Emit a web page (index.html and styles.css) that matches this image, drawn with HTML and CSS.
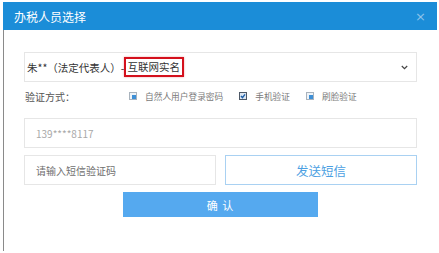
FILE: index.html
```html
<!DOCTYPE html>
<html lang="zh-CN">
<head>
<meta charset="utf-8">
<title>办税人员选择</title>
<link rel="stylesheet" href="styles.css">
</head>
<body>
<div class="dialog">
  <div class="dialog-header">
    <span class="dialog-title">办税人员选择</span>
    <span class="dialog-close">×</span>
  </div>
  <div class="dialog-body">
    <div class="select">
      <span class="select-text">朱**（法定代表人）-<span class="mark">互联网实名</span></span>
      <svg class="chevron" width="7" height="5" viewBox="0 0 7 5"><path d="M0.8 1 L3.5 3.7 L6.2 1" fill="none" stroke="#444" stroke-width="1.2"/></svg>
    </div>
    <div class="verify-row">
      <span class="verify-label">验证方式：</span>
      <div class="verify-options">
        <span class="option">
          <svg class="opt-icon" width="8" height="8" viewBox="0 0 8 8"><rect x="0.5" y="0.5" width="7" height="7" fill="#eef3f8" stroke="#a9b3bd"/><rect x="3" y="3" width="4" height="4" fill="#3e8fd6"/></svg>
          <span>自然人用户登录密码</span>
        </span>
        <span class="option">
          <svg class="opt-icon" width="8" height="8" viewBox="0 0 8 8"><rect x="0.5" y="0.5" width="7" height="7" fill="#dbe6f2" stroke="#4d5866"/><path d="M2 4 L3.5 5.6 L6 2.4" fill="none" stroke="#1d5ea8" stroke-width="1.4"/></svg>
          <span>手机验证</span>
        </span>
        <span class="option">
          <svg class="opt-icon" width="8" height="8" viewBox="0 0 8 8"><rect x="0.5" y="0.5" width="7" height="7" fill="#eef3f8" stroke="#a9b3bd"/><rect x="3" y="3" width="4" height="4" fill="#3e8fd6"/></svg>
          <span>刷脸验证</span>
        </span>
      </div>
    </div>
    <div class="field phone">139****8117</div>
    <div class="sms-row">
      <div class="field sms-input">请输入短信验证码</div>
      <div class="send-btn">发送短信</div>
    </div>
    <div class="confirm-btn">确 认</div>
  </div>
</div>
</body>
</html>
```
FILE: styles.css
```css
html, body {
  margin: 0;
  padding: 0;
  background: #ffffff;
}
body {
  width: 439px;
  height: 253px;
  overflow: hidden;
  font-family: "Noto Sans CJK SC", "Noto Sans", sans-serif;
}
.dialog {
  margin: 2px 0 0 3px;
  width: 434px;
}
.dialog-header {
  height: 28px;
  background: #1b8dd8;
  display: flex;
  align-items: center;
  justify-content: space-between;
  padding: 0 11px 0 11px;
}
.dialog-title {
  color: #ffffff;
  font-size: 12px;
}
.dialog-close {
  color: #8ec3ea;
  font-size: 13px;
  font-family: "DejaVu Sans", sans-serif;
  margin-top: 1px;
}
.dialog-body {
  box-sizing: border-box;
  border-left: 1px solid #8a8a8a;
  height: 221px;
  padding: 22px 20px 0 20px;
}
.select {
  height: 30px;
  box-sizing: border-box;
  border: 1px solid #e6e6e6;
  display: flex;
  align-items: center;
  justify-content: space-between;
  padding: 0 8px 0 2px;
}
.select-text {
  font-size: 10.5px;
  color: #333333;
  display: flex;
  align-items: center;
}
.mark {
  border: 2px solid #d4101c;
  padding: 1px 2px 1px 1px;
  line-height: 14px;
  box-shadow: 0 0 2px rgba(200, 0, 0, 0.35);
}
.chevron {
  display: block;
}
.verify-row {
  margin-top: 8px;
  height: 12px;
  display: flex;
  align-items: center;
}
.verify-label {
  width: 104px;
  padding-left: 1px;
  font-size: 10px;
  color: #555555;
}
.verify-options {
  display: flex;
  align-items: center;
  gap: 16px;
}
.option {
  display: flex;
  align-items: center;
  gap: 8px;
  font-size: 8.7px;
  color: #7a7a7a;
}
.opt-icon {
  display: block;
}
.field {
  height: 30px;
  box-sizing: border-box;
  border: 1px solid #e6e6e6;
  display: flex;
  align-items: center;
  padding-left: 11px;
  font-size: 10px;
}
.phone {
  margin-top: 16px;
  color: #a8a8a8;
}
.sms-row {
  margin-top: 7px;
  display: flex;
  gap: 9px;
}
.sms-input {
  width: 192px;
  color: #6f6f6f;
}
.send-btn {
  flex: 1;
  height: 30px;
  box-sizing: border-box;
  border: 1px solid #a9d1f2;
  display: flex;
  align-items: center;
  justify-content: center;
  color: #4c9fe2;
  font-size: 12.5px;
}
.confirm-btn {
  margin: 7px auto 0;
  width: 195px;
  height: 25px;
  background: #55a9ef;
  color: #ffffff;
  font-size: 11px;
  display: flex;
  align-items: center;
  justify-content: center;
  letter-spacing: 1px;
}
```
